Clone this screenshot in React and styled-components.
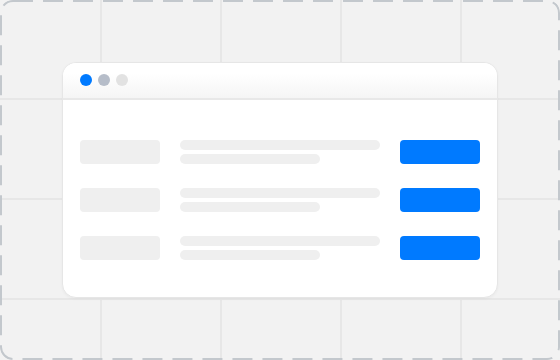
import React from "react";
import styled, { createGlobalStyle } from "styled-components";

const Global = createGlobalStyle`
  html, body { margin: 0; padding: 0; background: #f2f2f2; }
  body { font-family: "Inter", "Liberation Sans", sans-serif; }
  * { box-sizing: border-box; }
`;

const Canvas = styled.div`
  position: relative;
  width: 560px;
  height: 360px;
  border-radius: 12px;
  overflow: hidden;
  background-color: #f2f2f2;
  background-image:
    linear-gradient(to right, #e7e7e7 0 2px, transparent 2px),
    linear-gradient(to bottom, #e7e7e7 0 2px, transparent 2px);
  background-size: 120px 100%, 100% 100px;
  background-position: 100px 0, 0 98px;
  padding: 62px;
`;

const DashBorder = styled.svg`
  position: absolute;
  inset: 0;
  pointer-events: none;
`;

const Window = styled.div`
  width: 436px;
  height: 236px;
  background: #ffffff;
  border-radius: 14px;
  border: 1px solid #e6e6e6;
  box-shadow: 0 1px 3px rgba(0, 0, 0, 0.04);
  overflow: hidden;
  display: flex;
  flex-direction: column;
`;

const TitleBar = styled.div`
  height: 37px;
  flex: none;
  display: flex;
  align-items: center;
  gap: 6px;
  padding-left: 17px;
  padding-bottom: 1px;
  background: linear-gradient(to bottom, #ffffff 30%, #f5f5f5);
  border-bottom: 2px solid #e8e8e8;
`;

const Dot = styled.span`
  width: 12px;
  height: 12px;
  border-radius: 50%;
  background: ${(p) => p.$color};
`;

const Body = styled.div`
  display: flex;
  flex-direction: column;
  gap: 24px;
  padding: 40px 17px 0 17px;
`;

const Row = styled.div`
  display: flex;
  align-items: center;
  height: 24px;
  gap: 20px;
`;

const Thumb = styled.div`
  width: 80px;
  height: 24px;
  border-radius: 4px;
  background: #efefef;
`;

const Lines = styled.div`
  display: flex;
  flex-direction: column;
  gap: 4px;
  width: 200px;
`;

const Line = styled.div`
  height: 10px;
  border-radius: 5px;
  background: #efefef;
  width: ${(p) => p.$w}px;
`;

const Action = styled.div`
  width: 80px;
  height: 24px;
  border-radius: 4px;
  background: #007aff;
`;

export default function App() {
  const rows = [0, 1, 2];
  return (
    <>
      <Global />
      <Canvas>
        <Window>
          <TitleBar>
            <Dot $color="#007aff" />
            <Dot $color="#b6bdc9" />
            <Dot $color="#e2e2e2" />
          </TitleBar>
          <Body>
            {rows.map((r) => (
              <Row key={r}>
                <Thumb />
                <Lines>
                  <Line $w={200} />
                  <Line $w={140} />
                </Lines>
                <Action />
              </Row>
            ))}
          </Body>
        </Window>
        <DashBorder width="560" height="360" viewBox="0 0 560 360">
          <rect
            x="1"
            y="1"
            width="558"
            height="358"
            rx="12"
            fill="none"
            stroke="#c3c8cd"
            strokeWidth="2"
            strokeDasharray="20 10"
          />
        </DashBorder>
      </Canvas>
    </>
  );
}
